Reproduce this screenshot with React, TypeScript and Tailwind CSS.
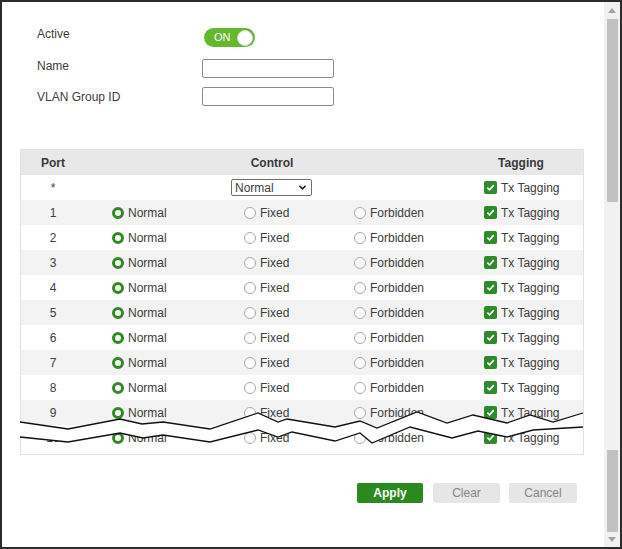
import React from 'react';

const rows = [1, 2, 3, 4, 5, 6, 7, 8, 9, 10];

const upper = '0,273 48,280 100,270 122,275 143,273 190,280 238,264 258,273 267,270 315,278 340,272 357,279 397,263 427,274 453,266 487,274 510,266 533,273 563,264';
const lower = '0,288 48,293 100,284 123,289 143,286 190,293 238,281 258,288 272,283 315,292 340,284 352,294 390,278 432,289 458,282 487,288 513,281 563,278';
const lowerRev = lower.split(' ').reverse().join(' ');

const Radio: React.FC<{ checked?: boolean; label: string }> = ({ checked, label }) => (
  <div className="flex items-center gap-[4px]">
    {checked ? (
      <span className="w-[12px] h-[12px] rounded-full border-[3px] border-[#2f8a21] bg-white" />
    ) : (
      <span className="w-[12px] h-[12px] rounded-full border border-[#a8a8a8] bg-white" />
    )}
    <span>{label}</span>
  </div>
);

const Check: React.FC = () => (
  <div className="flex items-center gap-[4px]">
    <span className="w-[13px] h-[13px] rounded-[2px] bg-[#2f8a2b] flex items-center justify-center">
      <svg width="9" height="9" viewBox="0 0 10 10">
        <path d="M1.5 5.2 L4 7.6 L8.6 2.4" fill="none" stroke="white" strokeWidth="1.8" />
      </svg>
    </span>
    <span>Tx Tagging</span>
  </div>
);

const App: React.FC = () => {
  return (
    <div
      className="w-[622px] h-[549px] border-2 border-[#2b2b2b] flex bg-white text-[12px] text-[#3d3d3d]"
      style={{ fontFamily: '"Liberation Sans", Arial, sans-serif' }}
    >
      <div className="flex-1 flex flex-col">
        {/* form */}
        <div className="pt-[25px] pl-[35px] flex flex-col">
          <div className="flex items-center h-[21px]">
            <span className="w-[167px] mb-[7px]">Active</span>
            <div className="w-[51px] h-[19px] rounded-full bg-[#63b92b] flex items-center justify-between pl-[10px] pr-[2px]">
              <span className="text-white text-[11px]">ON</span>
              <span className="w-[16px] h-[16px] rounded-full bg-white border border-[#d8d8d8]" />
            </div>
          </div>
          <div className="flex items-center h-[19px] mt-[11px]">
            <span className="w-[165px] mb-[5px]">Name</span>
            <div className="w-[132px] h-[19px] border border-[#8a8a8a] rounded-[2px]" />
          </div>
          <div className="flex items-center h-[19px] mt-[9px]">
            <span className="w-[165px]">VLAN Group ID</span>
            <div className="w-[132px] h-[19px] border border-[#8a8a8a] rounded-[2px]" />
          </div>
        </div>

        {/* table */}
        <div className="relative ml-[18px] mt-[43px] w-[564px] h-[306px] border border-[#e2e2e2]">
          <div className="flex items-center h-[25px] bg-[#e8e8e8] font-bold text-[#3a3a3a]">
            <span className="w-[64px] text-center">Port</span>
            <span className="w-[374px] text-center">Control</span>
            <span className="w-[124px] text-center">Tagging</span>
          </div>
          <div className="flex items-center h-[25px]">
            <span className="w-[64px] text-center">*</span>
            <span className="w-[146px]" />
            <div className="w-[81px] h-[17px] border border-[#6f6f6f] rounded-[2px] flex items-center justify-between pl-[3px] pr-[4px]">
              <span>Normal</span>
              <svg width="9" height="7" viewBox="0 0 10 8">
                <path d="M1.5 2 L5 5.5 L8.5 2" fill="none" stroke="#222" strokeWidth="2" />
              </svg>
            </div>
            <span className="w-[172px]" />
            <Check />
          </div>
          {rows.map((n) => (
            <div key={n} className={`flex items-center h-[25px] ${n % 2 === 1 ? 'bg-[#f3f3f3]' : 'bg-white'}`}>
              <span className="w-[64px] text-center">{n}</span>
              <div className="w-[159px] pl-[27px]">
                <Radio checked label="Normal" />
              </div>
              <div className="w-[110px]">
                <Radio label="Fixed" />
              </div>
              <div className="w-[130px]">
                <Radio label="Forbidden" />
              </div>
              <Check />
            </div>
          ))}
          <svg className="absolute left-[-1px] top-[-1px]" width="564" height="306" viewBox="0 0 564 306">
            <polygon points={`${upper} ${lowerRev}`} fill="white" />
            <polyline points={upper} fill="none" stroke="#111" strokeWidth="1.3" />
            <polyline points={lower} fill="none" stroke="#111" strokeWidth="1.3" />
          </svg>
        </div>

        {/* buttons */}
        <div className="flex justify-end pr-[27px] mt-[28px]">
          <button className="w-[66px] h-[20px] rounded-[2px] bg-[#2a8a20] text-white font-bold text-[12px]">Apply</button>
          <button className="ml-[10px] w-[67px] h-[20px] rounded-[2px] bg-[#e6e6e6] text-[#858585] text-[12px]">Clear</button>
          <button className="ml-[9px] w-[68px] h-[20px] rounded-[2px] bg-[#e6e6e6] text-[#858585] text-[12px]">Cancel</button>
        </div>
      </div>

      {/* scrollbar */}
      <div className="w-[16px] bg-[#f1f1f1] flex flex-col items-center">
        <div className="h-[17px] flex items-center justify-center">
          <svg width="8" height="5" viewBox="0 0 8 5">
            <path d="M0 5 L4 0 L8 5 Z" fill="#a3a3a3" />
          </svg>
        </div>
        <div className="w-[11px] h-[183px] bg-[#c1c1c1]" />
        <div className="flex-1" />
        <div className="w-[11px] h-[82px] bg-[#c1c1c1]" />
        <div className="h-[15px] flex items-center justify-center">
          <svg width="8" height="5" viewBox="0 0 8 5">
            <path d="M0 0 L8 0 L4 5 Z" fill="#a3a3a3" />
          </svg>
        </div>
      </div>
    </div>
  );
};

export default App;
